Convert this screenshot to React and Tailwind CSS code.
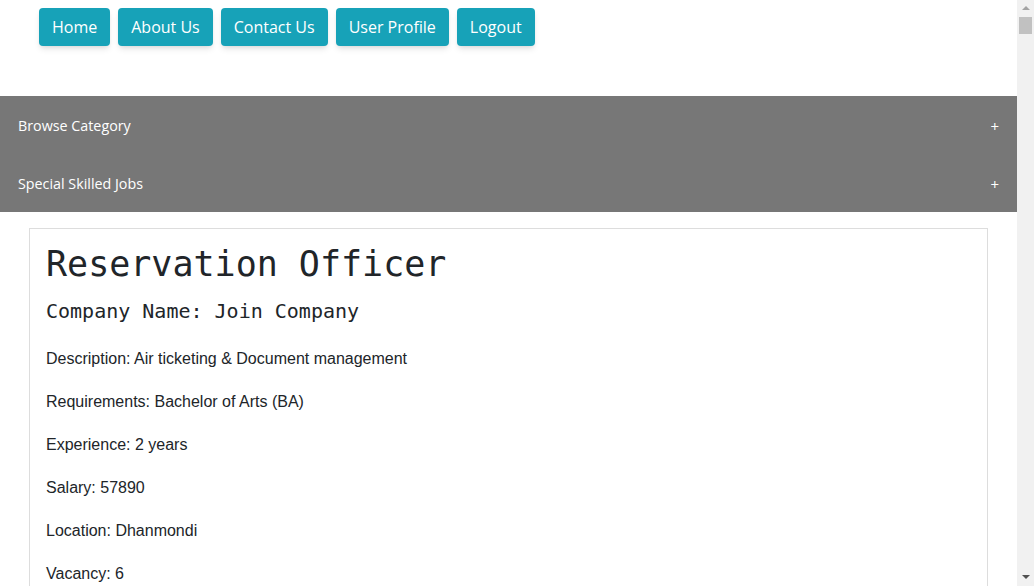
import { useState } from "react";

const navLinks = ["Home", "About Us", "Contact Us", "User Profile", "Logout"];

const job = {
  title: "Reservation Officer",
  company: "Join Company",
  details: [
    ["Description", "Air ticketing & Document management"],
    ["Requirements", "Bachelor of Arts (BA)"],
    ["Experience", "2 years"],
    ["Salary", "57890"],
    ["Location", "Dhanmondi"],
    ["Vacancy", "6"],
  ],
};

const sections = ["Browse Category", "Special Skilled Jobs"];

const App = () => {
  const [open, setOpen] = useState(null);

  return (
    <div className="flex h-[586px] w-full overflow-hidden bg-white">
      <div className="flex-1 overflow-hidden">
        <nav className="flex gap-2 pl-[39px] pt-2 font-['Open_Sans',sans-serif]">
          {navLinks.map((link) => (
            <button
              key={link}
              className="h-[38px] rounded bg-[#17a2b8] px-[13px] text-[16px] text-white shadow-md"
            >
              {link}
            </button>
          ))}
        </nav>

        <div className="mt-[50px] bg-[#777777] font-['Open_Sans',sans-serif] text-white">
          {sections.map((s, i) => (
            <div key={s}>
              <button
                onClick={() => setOpen(open === i ? null : i)}
                className="flex h-[58px] w-full items-center justify-between px-[18px] pt-[2px] text-[14.3px]"
              >
                <span>{s}</span>
                <span className="text-[15px]">+</span>
              </button>
            </div>
          ))}
        </div>

        <div className="mx-[29px] mt-4 border border-[#dddddd] px-4 pt-[14px] text-[#212529]">
          <h1 className="mb-3 font-['DejaVu_Sans_Mono',monospace] text-[35px] leading-[42px]">
            {job.title}
          </h1>
          <h3 className="mb-[22px] font-['DejaVu_Sans_Mono',monospace] text-[20px] leading-7">
            Company Name: {job.company}
          </h3>
          {job.details.map(([label, value]) => (
            <p
              key={label}
              className="mb-[19px] font-['Liberation_Sans',Arial,sans-serif] text-[16px] leading-6"
            >
              {label}: {value}
            </p>
          ))}
        </div>
      </div>

      {/* fake scrollbar */}
      <div className="flex w-[17px] flex-col items-center bg-[#f1f1f1]">
        <div className="mt-[6px] h-0 w-0 border-x-[4px] border-b-[4px] border-x-transparent border-b-[#a3a3a3]" />
        <div className="mt-[7px] h-[17px] w-[13px] bg-[#c1c1c1]" />
        <div className="flex-1" />
        <div className="mb-[7px] h-0 w-0 border-x-[4px] border-t-[4px] border-x-transparent border-t-[#505050]" />
      </div>
    </div>
  );
};

export default App;
